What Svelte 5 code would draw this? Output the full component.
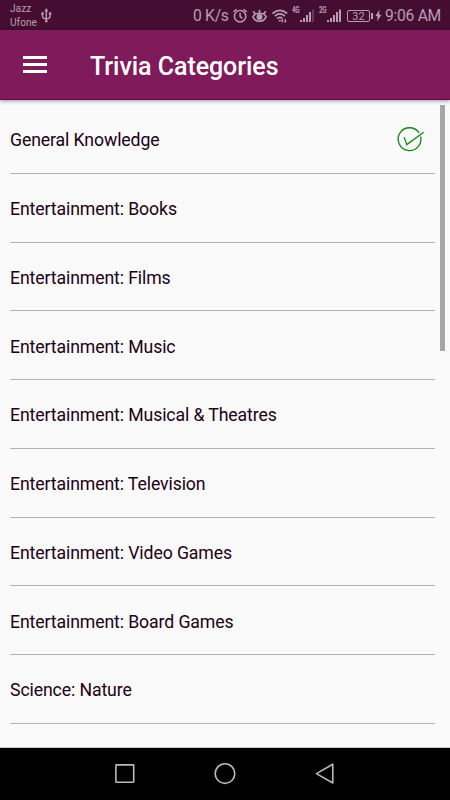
<script lang="ts">
    const categories: Array<{ name: string; selected?: boolean }> = [
        { name: 'General Knowledge', selected: true },
        { name: 'Entertainment: Books' },
        { name: 'Entertainment: Films' },
        { name: 'Entertainment: Music' },
        { name: 'Entertainment: Musical & Theatres' },
        { name: 'Entertainment: Television' },
        { name: 'Entertainment: Video Games' },
        { name: 'Entertainment: Board Games' },
        { name: 'Science: Nature' }
    ];

    const networks = ['4G', '2G'];
</script>

<div class="screen">
    <div class="status-bar">
        <div class="carriers">
            <span>Jazz</span>
            <span>Ufone</span>
        </div>
        <svg class="usb" width="12" height="16" viewBox="0 0 12 16" fill="none" stroke="currentColor" stroke-width="1.4">
            <path d="M5.3 2.5V14M1.5 5.5V8q0 2.6 3.8 2.8M9.1 5.5V8q0 2.6-3.8 2.8" />
            <path d="M5.3 0L3.3 3.5H7.3ZM0.3 4.3h2.4v2.4H0.3ZM7.9 4.3h2.4v2.4H7.9ZM4.1 12.2h2.4v2H4.1Z" fill="currentColor" stroke="none" />
        </svg>

        <div class="indicators">
            <span class="speed">0 K/s</span>
            <svg class="alarm" width="15" height="16" viewBox="0 0 15 16" fill="none" stroke="currentColor" stroke-width="1.5">
                <circle cx="7.1" cy="8.3" r="5.7" />
                <path d="M7.1 5V8.5L9.4 10.3M0.5 3.9L3.7 1.2M13.7 3.9L10.5 1.2" />
            </svg>
            <svg class="eye" width="16" height="16" viewBox="0 0 16 16" fill="none" stroke="currentColor" stroke-width="1.6">
                <path d="M0.9 8.8Q2.5 5.2 7.5 5.2T14.1 8.8Q12 13.3 7.5 13.3T0.9 8.8Z" />
                <circle cx="7.5" cy="9" r="2.2" fill="currentColor" />
                <path d="M7.5 4.8V1.8M3.3 5.8L1.2 3.4M11.7 5.8L13.8 3.4" />
            </svg>
            <svg class="wifi" width="18" height="16" viewBox="0 0 18 16" fill="none" stroke="currentColor" stroke-width="1.7">
                <path d="M0.5 5.5Q7.8-0.9 15.1 5.5M2.8 8.1Q7.8 3.7 12.8 8.1M5.1 10.7Q7.8 8.3 10.3 10.5" />
                <path d="M6.3 12L7.8 14L9.3 12ZM10.3 10.9L11.8 12.5H10.9V14.4H9.7V12.5H8.8ZM13.3 14.7L14.8 13H13.9V11.1H12.7V13H11.8Z" fill="currentColor" stroke="none" />
            </svg>
            {#each networks as network}
                <div class="network">
                    <span class="generation">{network}</span>
                    <svg width="15" height="14" viewBox="0 0 15 14" fill="currentColor">
                        <path d="M0 11h2v2H0ZM3 9h2v4H3ZM6 6h2v7H6ZM9 3h2v10H9Z" />
                        <path d="M12 0.5h2V13h-2Z" opacity={network === '4G' ? 0.3 : 1} />
                    </svg>
                </div>
            {/each}
            <div class="battery">32</div>
            <svg class="bolt" width="7" height="14" viewBox="0 0 7 14" fill="currentColor">
                <path d="M4.5 0.8L0.3 7.3H2.7L2 12.5L6.5 5.8H4.1Z" />
            </svg>
            <span class="clock">9:06 AM</span>
        </div>
    </div>

    <header class="app-bar">
        <button class="menu" aria-label="Menu">
            <span></span>
            <span></span>
            <span></span>
        </button>
        <h1>Trivia Categories</h1>
    </header>

    <main>
        <ul class="categories">
            {#each categories as category}
                <li>
                    <span>{category.name}</span>
                    {#if category.selected}
                        <svg class="check" width="28" height="26" viewBox="0 0 28 26" fill="none" stroke="#128a12" stroke-width="1.3">
                            <path d="M22.1 6.9A11.4 11.4 0 1 0 23.6 10.3" />
                            <path d="M7.2 11.1L9.8 18.6L26.6 6.3" />
                        </svg>
                    {/if}
                </li>
            {/each}
        </ul>
        <div class="scrollbar"></div>
    </main>

    <nav class="nav-bar">
        <svg width="22" height="22" viewBox="0 0 22 22"><rect x="1.9" y="1.9" width="17.8" height="17.3" rx="0.5" /></svg>
        <svg width="22" height="22" viewBox="0 0 22 22"><circle cx="11" cy="10.6" r="9.8" /></svg>
        <svg width="22" height="22" viewBox="0 0 22 22"><path d="M18.8 1.2V20L2.4 10.6Z" stroke-linejoin="round" /></svg>
    </nav>
</div>

<style>
    .screen {
        display: flex;
        flex-direction: column;
        width: 450px;
        height: 800px;
        overflow: hidden;
        background: #fafafa;
        font-family: Roboto, sans-serif;
    }

    .status-bar {
        display: flex;
        flex: none;
        height: 30px;
        box-sizing: border-box;
        padding: 0 10px;
        background: #450d31;
        color: #b79eb0;
    }

    .carriers {
        display: flex;
        flex-direction: column;
        width: 31px;
        padding-top: 2px;
        font-size: 10.2px;
        line-height: 13.5px;
    }

    .usb {
        margin-top: 8px;
    }

    .indicators {
        display: flex;
        align-items: center;
        margin-left: auto;
        height: 31px;
        white-space: nowrap;
    }

    .indicators svg {
        flex: none;
    }

    .speed,
    .clock {
        font-size: 15.7px;
        letter-spacing: -0.3px;
    }

    .speed {
        width: 36px;
    }

    .alarm {
        margin-left: 4px;
    }

    .eye {
        margin-left: 4px;
    }

    .wifi {
        margin-left: 4px;
        margin-right: 2px;
    }

    .network {
        display: flex;
        width: 23px;
        margin-right: 4px;
        height: 15px;
    }

    .generation {
        width: 8px;
        height: 7px;
        flex: none;
        font-size: 7px;
        font-weight: 700;
        line-height: 7px;
        letter-spacing: -0.5px;
        transform: scale(0.9, 1.3);
        transform-origin: 0 50%;
    }

    .network svg {
        margin-top: 1px;
    }

    .battery {
        position: relative;
        width: 23px;
        height: 12px;
        box-sizing: border-box;
        border: 1px solid currentColor;
        border-radius: 2px;
        margin-left: 1px;
        font-size: 11px;
        line-height: 11px;
        text-align: center;
    }

    .battery::after {
        content: '';
        position: absolute;
        right: -4px;
        top: 2px;
        width: 2px;
        height: 6px;
        background: currentColor;
    }

    .bolt {
        margin: 0 3px 0 5px;
    }

    .clock {
        width: 55px;
    }

    .app-bar {
        display: flex;
        flex: none;
        align-items: center;
        position: relative;
        height: 70px;
        box-sizing: border-box;
        padding: 2px 23px 0;
        border-bottom: 1px solid #650b47;
        background: #7f1b5b;
        box-shadow: 0 1px 4px rgba(0, 0, 0, 0.4);
        color: #fff;
    }

    .menu {
        display: flex;
        flex-direction: column;
        gap: 4px;
        width: 24px;
        margin: 0 43px 2px 0;
        padding: 0;
        border: 0;
        background: none;
    }

    .menu span {
        height: 3px;
        background: #fff;
    }

    h1 {
        margin: 2px 0 0;
        font-size: 25px;
        font-weight: 500;
        line-height: 30px;
        letter-spacing: -0.05px;
        white-space: nowrap;
    }

    main {
        display: flex;
        flex: 1;
        min-height: 0;
        padding: 5px 5px 0 10px;
        border-bottom: 1px solid #ccc;
        overflow: hidden;
    }

    .categories {
        width: 425px;
        margin: 0;
        padding: 0;
        list-style: none;
    }

    li {
        display: flex;
        align-items: center;
        justify-content: space-between;
        height: 68.75px;
        box-sizing: border-box;
        padding: 3px 10px 0 0;
        border-bottom: 1px solid #b3b3b3;
        color: #210016;
        font-size: 17.7px;
        letter-spacing: -0.12px;
    }

    .check {
        margin-bottom: 2px;
    }

    .scrollbar {
        width: 5px;
        height: 246px;
        margin-left: 5px;
        background: #a6a6a6;
    }

    .nav-bar {
        display: flex;
        flex: none;
        align-items: center;
        justify-content: center;
        gap: 78px;
        height: 52px;
        background: #000;
    }

    .nav-bar svg {
        fill: none;
        stroke: #b8b8b8;
        stroke-width: 1.6;
    }
</style>
